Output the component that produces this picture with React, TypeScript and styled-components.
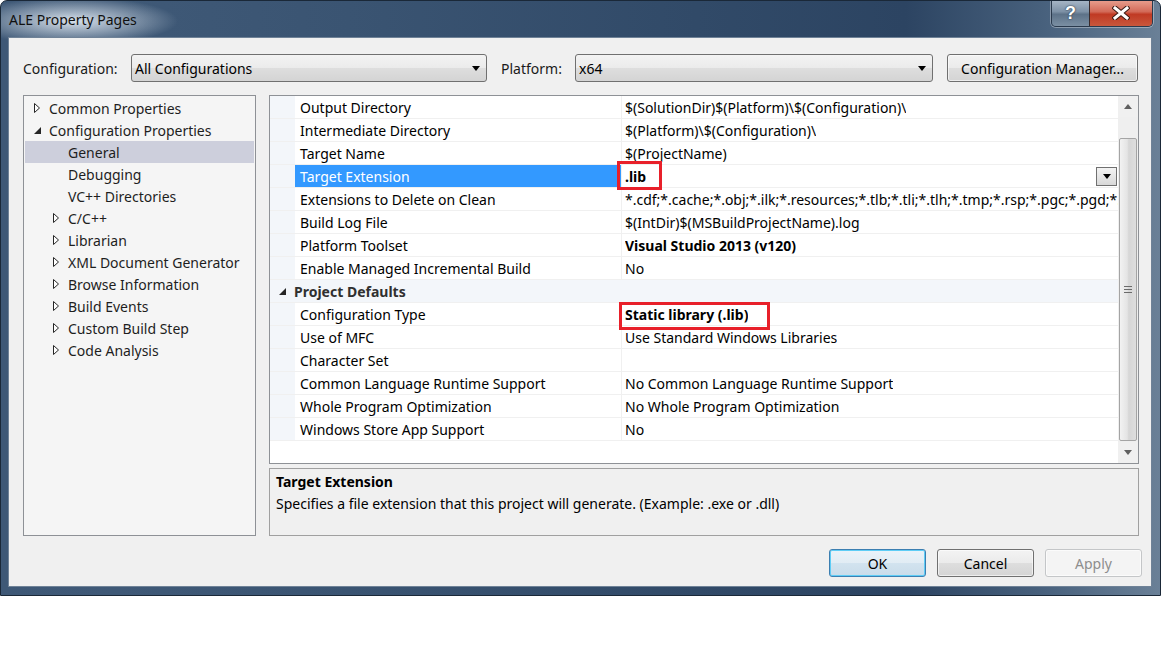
import React from "react";
import styled, { createGlobalStyle } from "styled-components";

const FONT = `"Segoe UI", "Noto Sans", "Open Sans", sans-serif`;

const GlobalStyle = createGlobalStyle`
  html, body { margin: 0; padding: 0; background: #ffffff; }
  body { font-family: ${FONT}; }
  * { box-sizing: border-box; }
`;

const Window = styled.div`
  width: 1161px;
  height: 596px;
  display: flex;
  flex-direction: column;
  border: 1px solid #1a2838;
  border-radius: 7px 7px 0 0;
  overflow: hidden;
  background:
    radial-gradient(ellipse 105px 24px at 72px 20px, rgba(232, 240, 248, 0.9), rgba(232, 240, 248, 0) 100%),
    linear-gradient(90deg, #3e5876 0%, #3f5977 10%, #3a5472 30%, #314a68 60%, #2c4462 78%, #48617d 90%, #6a8097 100%);
`;

const TitleBar = styled.div`
  height: 36px;
  display: flex;
  justify-content: space-between;
  align-items: flex-start;
`;

const Title = styled.div`
  padding: 7px 0 0 8px;
  font-size: 14px;
  line-height: 24px;
  color: #101010;
`;

const Caption = styled.div`
  display: flex;
  margin: -1px 7px 0 0;
  border: 1px solid #2a3a4d;
  border-top: none;
  border-radius: 0 0 5px 5px;
  overflow: hidden;
  box-shadow: 0 0 0 1px rgba(255, 255, 255, 0.35);
`;

const CapButton = styled.div<{ $w: number; $close?: boolean }>`
  width: ${(p) => p.$w}px;
  height: 26px;
  display: flex;
  align-items: center;
  justify-content: center;
  border-left: ${(p) => (p.$close ? "1px solid #3a2a2a" : "none")};
  background: ${(p) =>
    p.$close
      ? "linear-gradient(#e8a090 0%, #d26a58 45%, #c03a24 55%, #c9573c 100%)"
      : "linear-gradient(#a9b8c8 0%, #7d91a6 45%, #5d7288 55%, #7b8fa3 100%)"};
  color: #ffffff;
  font-family: "Liberation Sans", Arial, sans-serif;
  font-weight: bold;
  font-size: 18px;
  text-shadow: 0 0 2px #2b3a4a, 0 0 1px #2b3a4a;
`;

const Client = styled.div`
  flex: 1;
  margin: 0 8px 8px 7px;
  background: #f0f0f0;
  border: 1px solid #6f8297;
  padding: 16px 12px 9px 14px;
  display: flex;
  flex-direction: column;
`;

const Toolbar = styled.div`
  height: 28px;
  display: flex;
  align-items: center;
`;

const FieldLabel = styled.div<{ $w: number; $ml?: number }>`
  width: ${(p) => p.$w}px;
  margin-left: ${(p) => p.$ml ?? 0}px;
  font-size: 14px;
  color: #1a1a1a;
`;

const Combo = styled.div<{ $w: number }>`
  width: ${(p) => p.$w}px;
  height: 28px;
  border: 1px solid #707070;
  border-radius: 3px;
  background: linear-gradient(#f3f3f3 0%, #ebebeb 50%, #dedede 50%, #d4d4d4 100%);
  display: flex;
  align-items: center;
  justify-content: space-between;
  padding: 0 6px 0 3px;
  font-size: 14px;
  color: #000;
`;

const PushButton = styled.div<{ $w: number; $ml?: number; $kind?: "default" | "disabled" }>`
  width: ${(p) => p.$w}px;
  margin-left: ${(p) => p.$ml ?? 0}px;
  height: 28px;
  border-radius: 3px;
  display: flex;
  align-items: center;
  justify-content: center;
  font-size: 14px;
  border: 1px solid
    ${(p) => (p.$kind === "default" ? "#3c7fb1" : p.$kind === "disabled" ? "#c4c6c8" : "#707070")};
  color: ${(p) => (p.$kind === "disabled" ? "#8d8d8d" : "#000")};
  background: ${(p) =>
    p.$kind === "default"
      ? "linear-gradient(#eaf3f9 0%, #e1ecf4 50%, #d2e3ef 50%, #c9dcea 100%)"
      : p.$kind === "disabled"
      ? "#f4f4f4"
      : "linear-gradient(#f3f3f3 0%, #ebebeb 50%, #dedede 50%, #d4d4d4 100%)"};
  box-shadow: ${(p) => (p.$kind === "default" ? "inset 0 0 0 1px #5ecdf6" : "inset 0 0 0 1px rgba(255,255,255,0.6)")};
`;

const Panels = styled.div`
  margin-top: 13px;
  height: 441px;
  display: flex;
  gap: 13px;
`;

const Tree = styled.div`
  width: 233px;
  height: 100%;
  border: 1px solid #8e9196;
  background: #f5f5f5;
  padding-top: 1px;
`;

const TreeRow = styled.div<{ $level: number; $selected?: boolean }>`
  height: 22px;
  margin: 0 1px;
  display: flex;
  align-items: center;
  padding-left: ${(p) => 9 + p.$level * 19}px;
  background: ${(p) => (p.$selected ? "#cdcfdc" : "transparent")};
  font-size: 14px;
  color: #1e1e1e;
`;

const Expander = styled.span`
  width: 15px;
  display: flex;
  align-items: center;
`;

const RightCol = styled.div`
  width: 870px;
  display: flex;
  flex-direction: column;
  gap: 4px;
`;

const Grid = styled.div`
  height: 369px;
  border: 1px solid #8e9196;
  background: #ffffff;
  display: flex;
`;

const Rows = styled.div`
  flex: 1;
  overflow: hidden;
  display: flex;
  flex-direction: column;
`;

const Row = styled.div`
  height: 23px;
  display: grid;
  grid-template-columns: 25px 327px 1fr;
  border-bottom: 1px solid #f0f0f0;
  font-size: 14px;
  color: #000;
`;

const CatRow = styled.div`
  height: 23px;
  display: flex;
  align-items: center;
  background: #f3f6fa;
  border-bottom: 1px solid #f0f0f0;
  padding: 1px 0 0 9px;
  font-size: 14px;
  font-weight: bold;
  color: #303030;
`;

const Gutter = styled.div`
  background: #f3f6fa;
`;

const NameCell = styled.div<{ $selected?: boolean }>`
  display: flex;
  align-items: center;
  padding: 1px 0 0 5px;
  white-space: nowrap;
  overflow: hidden;
  border-right: 1px solid #f0f0f0;
  background: ${(p) => (p.$selected ? "#3399ff" : "#ffffff")};
  color: ${(p) => (p.$selected ? "#ffffff" : "#000")};
`;

const ValueCell = styled.div<{ $bold?: boolean }>`
  position: relative;
  display: flex;
  align-items: center;
  justify-content: space-between;
  padding: 1px 0 0 3px;
  white-space: nowrap;
  font-weight: ${(p) => (p.$bold ? "bold" : "normal")};
  min-width: 0;
`;

const ValueText = styled.span`
  overflow: hidden;
  white-space: nowrap;
`;

const DropButton = styled.div`
  flex: none;
  width: 21px;
  height: 19px;
  border: 1px solid #707070;
  background: linear-gradient(#f3f3f3 0%, #e6e6e6 50%, #d8d8d8 100%);
  display: flex;
  align-items: center;
  justify-content: center;
  margin: -1px 1px 0 0;
`;

const Highlight = styled.div<{ $l: number; $t: number; $w: number; $h: number }>`
  position: absolute;
  left: ${(p) => p.$l}px;
  top: ${(p) => p.$t}px;
  width: ${(p) => p.$w}px;
  height: ${(p) => p.$h}px;
  border: 3px solid #e8202a;
  pointer-events: none;
`;

const ScrollBar = styled.div`
  width: 20px;
  flex: none;
  background: #eaeaea;
  display: flex;
  flex-direction: column;
  align-items: center;
`;

const ScrollArrow = styled.div`
  height: 21px;
  width: 100%;
  display: flex;
  align-items: center;
  justify-content: center;
  background: #f0f0f0;
`;

const ScrollTrack = styled.div`
  flex: 1;
  width: 100%;
  display: flex;
  flex-direction: column;
  padding: 21px 1px 0 1px;
  background: #efefef;
`;

const Thumb = styled.div`
  height: 303px;
  border: 1px solid #a4a4a4;
  border-radius: 2px;
  background: linear-gradient(90deg, #f2f2f2 0%, #e4e4e4 45%, #d6d6d6 55%, #dedede 100%);
  display: flex;
  align-items: center;
  justify-content: center;
`;

const Description = styled.div`
  height: 68px;
  border: 1px solid #a0a0a0;
  background: #f0f0f0;
  padding: 2px 6px;
  font-size: 14px;
  color: #000;
`;

const DescTitle = styled.div`
  font-weight: bold;
  line-height: 22px;
`;

const DescText = styled.div`
  line-height: 22px;
`;

const ButtonRow = styled.div`
  margin-top: 13px;
  margin-right: -3px;
  display: flex;
  justify-content: flex-end;
  gap: 11px;
`;

const Collapsed = () => (
  <svg width="7" height="10" viewBox="0 0 7 10">
    <polygon points="0.5,0.5 5.5,5 0.5,9.5" fill="#ffffff" stroke="#262626" strokeWidth="1" />
  </svg>
);

const Expanded = () => (
  <svg width="7" height="7" viewBox="0 0 7 7">
    <polygon points="7,0 7,7 0,7" fill="#262626" />
  </svg>
);

const DownArrow = ({ color = "#000" }: { color?: string }) => (
  <svg width="8" height="5" viewBox="0 0 8 5">
    <polygon points="0,0 8,0 4,5" fill={color} />
  </svg>
);

const UpArrow = ({ color = "#606060" }: { color?: string }) => (
  <svg width="8" height="5" viewBox="0 0 8 5">
    <polygon points="0,5 8,5 4,0" fill={color} />
  </svg>
);

const Grip = () => (
  <svg width="8" height="8" viewBox="0 0 8 8">
    <rect x="0" y="0" width="8" height="1" fill="#6b6b6b" />
    <rect x="0" y="3" width="8" height="1" fill="#6b6b6b" />
    <rect x="0" y="6" width="8" height="1" fill="#6b6b6b" />
  </svg>
);

const CloseGlyph = () => (
  <svg width="18" height="14" viewBox="0 0 18 14">
    <path d="M3 2 L15 12 M15 2 L3 12" stroke="#3a1a14" strokeWidth="5" strokeLinecap="square" />
    <path d="M3 2 L15 12 M15 2 L3 12" stroke="#ffffff" strokeWidth="3" strokeLinecap="square" />
  </svg>
);

type TreeItem = { label: string; level: number; state: "collapsed" | "expanded" | "leaf"; selected?: boolean };

const treeItems: TreeItem[] = [
  { label: "Common Properties", level: 0, state: "collapsed" },
  { label: "Configuration Properties", level: 0, state: "expanded" },
  { label: "General", level: 1, state: "leaf", selected: true },
  { label: "Debugging", level: 1, state: "leaf" },
  { label: "VC++ Directories", level: 1, state: "leaf" },
  { label: "C/C++", level: 1, state: "collapsed" },
  { label: "Librarian", level: 1, state: "collapsed" },
  { label: "XML Document Generator", level: 1, state: "collapsed" },
  { label: "Browse Information", level: 1, state: "collapsed" },
  { label: "Build Events", level: 1, state: "collapsed" },
  { label: "Custom Build Step", level: 1, state: "collapsed" },
  { label: "Code Analysis", level: 1, state: "collapsed" },
];

type Prop = {
  name: string;
  value: string;
  bold?: boolean;
  selected?: boolean;
  box?: { l: number; t: number; w: number; h: number };
  category?: boolean;
};

const props: Prop[] = [
  { name: "Output Directory", value: "$(SolutionDir)$(Platform)\\$(Configuration)\\" },
  { name: "Intermediate Directory", value: "$(Platform)\\$(Configuration)\\" },
  { name: "Target Name", value: "$(ProjectName)" },
  { name: "Target Extension", value: ".lib", bold: true, selected: true, box: { l: -5, t: -4, w: 45, h: 29 } },
  {
    name: "Extensions to Delete on Clean",
    value: "*.cdf;*.cache;*.obj;*.ilk;*.resources;*.tlb;*.tli;*.tlh;*.tmp;*.rsp;*.pgc;*.pgd;*.meta;",
  },
  { name: "Build Log File", value: "$(IntDir)$(MSBuildProjectName).log" },
  { name: "Platform Toolset", value: "Visual Studio 2013 (v120)", bold: true },
  { name: "Enable Managed Incremental Build", value: "No" },
  { name: "Project Defaults", value: "", category: true },
  { name: "Configuration Type", value: "Static library (.lib)", bold: true, box: { l: -3, t: -1, w: 151, h: 28 } },
  { name: "Use of MFC", value: "Use Standard Windows Libraries" },
  { name: "Character Set", value: "" },
  { name: "Common Language Runtime Support", value: "No Common Language Runtime Support" },
  { name: "Whole Program Optimization", value: "No Whole Program Optimization" },
  { name: "Windows Store App Support", value: "No" },
];

export default function App() {
  return (
    <>
      <GlobalStyle />
      <Window>
        <TitleBar>
          <Title>ALE Property Pages</Title>
          <Caption>
            <CapButton $w={37}>?</CapButton>
            <CapButton $w={63} $close>
              <CloseGlyph />
            </CapButton>
          </Caption>
        </TitleBar>
        <Client>
          <Toolbar>
            <FieldLabel $w={108}>Configuration:</FieldLabel>
            <Combo $w={356}>
              <span>All Configurations</span>
              <DownArrow />
            </Combo>
            <FieldLabel $w={74} $ml={14}>Platform:</FieldLabel>
            <Combo $w={358}>
              <span>x64</span>
              <DownArrow />
            </Combo>
            <PushButton $w={191} $ml={14}>Configuration Manager...</PushButton>
          </Toolbar>
          <Panels>
            <Tree>
              {treeItems.map((t) => (
                <TreeRow key={t.label} $level={t.level} $selected={t.selected}>
                  <Expander>
                    {t.state === "collapsed" && <Collapsed />}
                    {t.state === "expanded" && <Expanded />}
                  </Expander>
                  {t.label}
                </TreeRow>
              ))}
            </Tree>
            <RightCol>
              <Grid>
                <Rows>
                  {props.map((p) =>
                    p.category ? (
                      <CatRow key={p.name}>
                        <Expander>
                          <Expanded />
                        </Expander>
                        {p.name}
                      </CatRow>
                    ) : (
                      <Row key={p.name}>
                        <Gutter />
                        <NameCell $selected={p.selected}>{p.name}</NameCell>
                        <ValueCell $bold={p.bold}>
                          <ValueText>{p.value}</ValueText>
                          {p.selected && (
                            <DropButton>
                              <DownArrow />
                            </DropButton>
                          )}
                          {p.box && <Highlight $l={p.box.l} $t={p.box.t} $w={p.box.w} $h={p.box.h} />}
                        </ValueCell>
                      </Row>
                    )
                  )}
                </Rows>
                <ScrollBar>
                  <ScrollArrow>
                    <UpArrow />
                  </ScrollArrow>
                  <ScrollTrack>
                    <Thumb>
                      <Grip />
                    </Thumb>
                  </ScrollTrack>
                  <ScrollArrow>
                    <DownArrow color="#606060" />
                  </ScrollArrow>
                </ScrollBar>
              </Grid>
              <Description>
                <DescTitle>Target Extension</DescTitle>
                <DescText>Specifies a file extension that this project will generate. (Example: .exe or .dll)</DescText>
              </Description>
            </RightCol>
          </Panels>
          <ButtonRow>
            <PushButton $w={97} $kind="default">OK</PushButton>
            <PushButton $w={97}>Cancel</PushButton>
            <PushButton $w={97} $kind="disabled">Apply</PushButton>
          </ButtonRow>
        </Client>
      </Window>
    </>
  );
}
